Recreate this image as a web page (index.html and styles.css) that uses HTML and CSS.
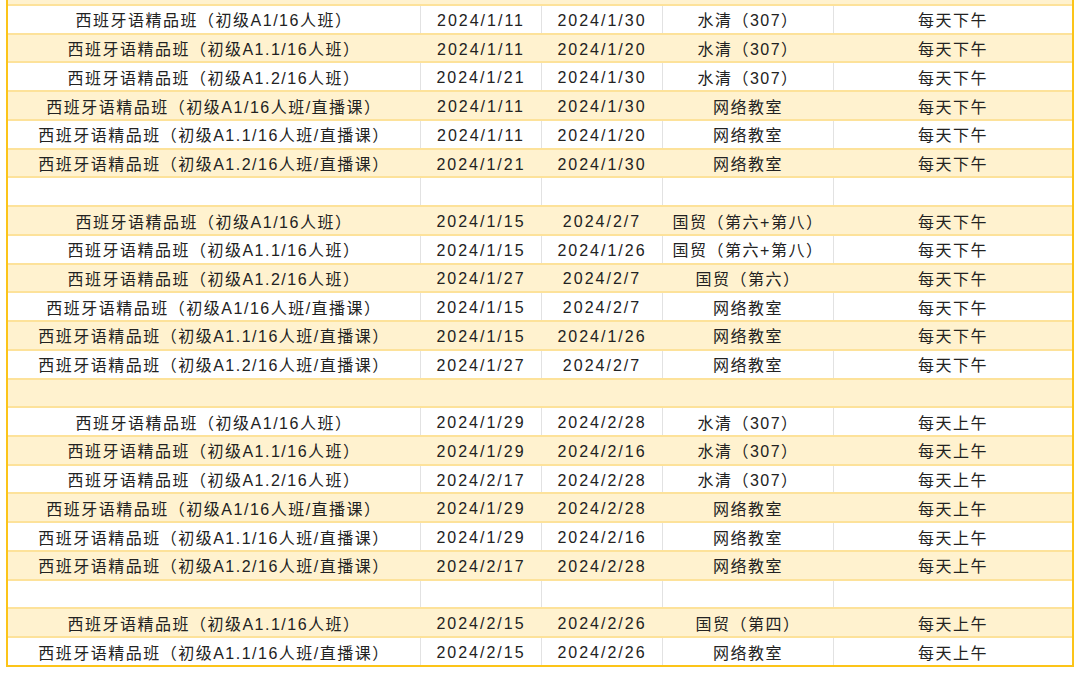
FILE: index.html
```html
<!DOCTYPE html>
<html lang="zh-CN">
<head>
<meta charset="utf-8">
<title>西班牙语精品班课程表</title>
<link rel="stylesheet" href="styles.css">
</head>
<body>
<div class="sheet">
  <div class="row lead alt"></div>

  <div class="row"><div class="c">西班牙语精品班（初级A1/16人班）</div><div class="c d">2024/1/11</div><div class="c d">2024/1/30</div><div class="c">水清（307）</div><div class="c">每天下午</div></div>
  <div class="row alt"><div class="c">西班牙语精品班（初级A1.1/16人班）</div><div class="c d">2024/1/11</div><div class="c d">2024/1/20</div><div class="c">水清（307）</div><div class="c">每天下午</div></div>
  <div class="row"><div class="c">西班牙语精品班（初级A1.2/16人班）</div><div class="c d">2024/1/21</div><div class="c d">2024/1/30</div><div class="c">水清（307）</div><div class="c">每天下午</div></div>
  <div class="row alt"><div class="c">西班牙语精品班（初级A1/16人班/直播课）</div><div class="c d">2024/1/11</div><div class="c d">2024/1/30</div><div class="c">网络教室</div><div class="c">每天下午</div></div>
  <div class="row"><div class="c">西班牙语精品班（初级A1.1/16人班/直播课）</div><div class="c d">2024/1/11</div><div class="c d">2024/1/20</div><div class="c">网络教室</div><div class="c">每天下午</div></div>
  <div class="row alt"><div class="c">西班牙语精品班（初级A1.2/16人班/直播课）</div><div class="c d">2024/1/21</div><div class="c d">2024/1/30</div><div class="c">网络教室</div><div class="c">每天下午</div></div>
  <div class="row"><div class="c"></div><div class="c"></div><div class="c"></div><div class="c"></div><div class="c"></div></div>

  <div class="row alt"><div class="c">西班牙语精品班（初级A1/16人班）</div><div class="c d">2024/1/15</div><div class="c d">2024/2/7</div><div class="c">国贸（第六+第八）</div><div class="c">每天下午</div></div>
  <div class="row"><div class="c">西班牙语精品班（初级A1.1/16人班）</div><div class="c d">2024/1/15</div><div class="c d">2024/1/26</div><div class="c">国贸（第六+第八）</div><div class="c">每天下午</div></div>
  <div class="row alt"><div class="c">西班牙语精品班（初级A1.2/16人班）</div><div class="c d">2024/1/27</div><div class="c d">2024/2/7</div><div class="c">国贸（第六）</div><div class="c">每天下午</div></div>
  <div class="row"><div class="c">西班牙语精品班（初级A1/16人班/直播课）</div><div class="c d">2024/1/15</div><div class="c d">2024/2/7</div><div class="c">网络教室</div><div class="c">每天下午</div></div>
  <div class="row alt"><div class="c">西班牙语精品班（初级A1.1/16人班/直播课）</div><div class="c d">2024/1/15</div><div class="c d">2024/1/26</div><div class="c">网络教室</div><div class="c">每天下午</div></div>
  <div class="row"><div class="c">西班牙语精品班（初级A1.2/16人班/直播课）</div><div class="c d">2024/1/27</div><div class="c d">2024/2/7</div><div class="c">网络教室</div><div class="c">每天下午</div></div>
  <div class="row alt"><div class="c"></div><div class="c"></div><div class="c"></div><div class="c"></div><div class="c"></div></div>

  <div class="row"><div class="c">西班牙语精品班（初级A1/16人班）</div><div class="c d">2024/1/29</div><div class="c d">2024/2/28</div><div class="c">水清（307）</div><div class="c">每天上午</div></div>
  <div class="row alt"><div class="c">西班牙语精品班（初级A1.1/16人班）</div><div class="c d">2024/1/29</div><div class="c d">2024/2/16</div><div class="c">水清（307）</div><div class="c">每天上午</div></div>
  <div class="row"><div class="c">西班牙语精品班（初级A1.2/16人班）</div><div class="c d">2024/2/17</div><div class="c d">2024/2/28</div><div class="c">水清（307）</div><div class="c">每天上午</div></div>
  <div class="row alt"><div class="c">西班牙语精品班（初级A1/16人班/直播课）</div><div class="c d">2024/1/29</div><div class="c d">2024/2/28</div><div class="c">网络教室</div><div class="c">每天上午</div></div>
  <div class="row"><div class="c">西班牙语精品班（初级A1.1/16人班/直播课）</div><div class="c d">2024/1/29</div><div class="c d">2024/2/16</div><div class="c">网络教室</div><div class="c">每天上午</div></div>
  <div class="row alt"><div class="c">西班牙语精品班（初级A1.2/16人班/直播课）</div><div class="c d">2024/2/17</div><div class="c d">2024/2/28</div><div class="c">网络教室</div><div class="c">每天上午</div></div>
  <div class="row"><div class="c"></div><div class="c"></div><div class="c"></div><div class="c"></div><div class="c"></div></div>

  <div class="row alt"><div class="c">西班牙语精品班（初级A1.1/16人班）</div><div class="c d">2024/2/15</div><div class="c d">2024/2/26</div><div class="c">国贸（第四）</div><div class="c">每天上午</div></div>
  <div class="row"><div class="c">西班牙语精品班（初级A1.1/16人班/直播课）</div><div class="c d">2024/2/15</div><div class="c d">2024/2/26</div><div class="c">网络教室</div><div class="c">每天上午</div></div>
</div>
</body>
</html>
```

FILE: styles.css
```css
html, body {
  margin: 0;
  padding: 0;
  background: #ffffff;
}

.sheet {
  margin-left: 6px;
  width: 1068px;
  box-sizing: border-box;
  border-left: 2px solid #fcc419;
  border-right: 2px solid #fcc419;
  border-bottom: 2px solid #fcc419;
  font-family: "Liberation Sans", "Noto Sans CJK SC", sans-serif;
  font-size: 16px;
  letter-spacing: 1.5px;
  color: #222222;
}

.row {
  display: grid;
  grid-template-columns: 412px 121px 121px 171px 1fr;
  height: 28.74px;
  box-sizing: border-box;
  border-top: 2px solid #fde29a;
  background: #ffffff;
}

.row.lead {
  height: 4px;
  border-top: 0;
}

.row.alt {
  background: #fff2cf;
}

.c {
  display: flex;
  align-items: center;
  justify-content: center;
  white-space: nowrap;
  overflow: hidden;
}

.c.d {
  letter-spacing: 2px;
  padding-top: 3px;
}

.row .c + .c {
  border-left: 1px solid #e2e2e2;
}

.row.alt .c + .c {
  border-left-color: #fff2cf;
}
```
